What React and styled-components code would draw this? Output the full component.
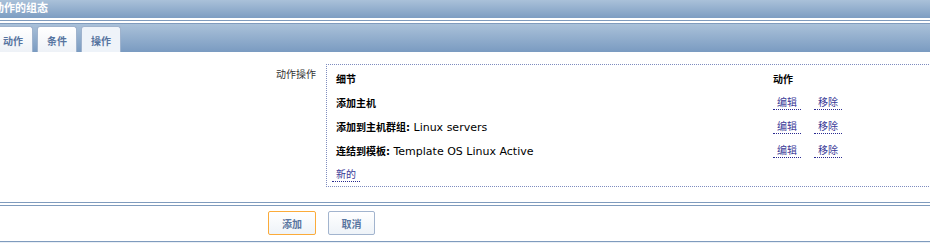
import React from "react";
import styled, { createGlobalStyle } from "styled-components";

const Global = createGlobalStyle`
  html, body { margin: 0; padding: 0; background: #e9eff6; overflow: hidden; }
  body { font-family: "DejaVu Sans", "Noto Sans CJK SC", sans-serif; font-size: 10px; color: #000; }
`;

const Page = styled.div`
  margin-left: -7px;
  width: 1200px;
  background: #fff;
`;

const TitleBar = styled.div`
  height: 18px;
  background: linear-gradient(#aac1d9, #7d9dc2);
  color: #fff;
  font-weight: bold;
  font-size: 11px;
  line-height: 18px;
  display: flex;
  align-items: center;
`;

const Rule = styled.div`
  height: 1px;
  background: #7f9bbd;
  margin-top: ${(p) => p.$gap || 0}px;
`;

const TabBar = styled.div`
  height: 28px;
  background: linear-gradient(#aac1d9, #7a9bc1);
  display: flex;
  align-items: flex-end;
  gap: 4px;
`;

const Tab = styled.div`
  width: 38px;
  height: 24px;
  border: 1px solid #9fb3cd;
  border-bottom: none;
  border-radius: 3px 3px 0 0;
  background: ${(p) => (p.$active ? "#eef3f9" : "linear-gradient(#ffffff, #eef2f7)")};
  color: #5674a0;
  font-weight: bold;
  display: flex;
  align-items: center;
  justify-content: center;
  padding-top: 1px;
  box-sizing: content-box;
`;

const Content = styled.div`
  padding: 12px 0 15px;
  display: flex;
  align-items: flex-start;
`;

const Label = styled.div`
  width: 323px;
  text-align: right;
  color: #333;
  padding-top: 4px;
  line-height: 13px;
  margin-right: 10px;
`;

const Box = styled.div`
  width: 700px;
  border: 1px dotted #7e8cbf;
  padding: 2px 0 0 5px;
  height: 119px;
  box-sizing: content-box;
  display: grid;
  grid-template-columns: 437px 1fr;
  grid-auto-rows: 24px;
  align-content: start;
  align-items: center;
`;

const Cell = styled.div`
  padding-left: ${(p) => (p.$flush ? 0 : 4)}px;
  display: flex;
  align-items: center;
  gap: 13px;
  line-height: 13px;
  white-space: nowrap;
`;

const Strong = styled.b`
  font-weight: bold;
`;

const Latin = styled.span`
  font-size: 11px;
`;

const Link = styled.span`
  display: inline-block;
  padding: 0 4px;
  line-height: 13px;
  color: #3a3a98;
  border-bottom: 1px dotted #2a2a90;
  cursor: pointer;
`;

const Footer = styled.div`
  padding: 5px 0 0 275px;
  height: 30px;
  display: flex;
  gap: 12px;
  align-items: flex-start;
  border-bottom: 1px solid #7f9bbd;
`;

const Button = styled.button`
  width: ${(p) => p.$w}px;
  height: 24px;
  border: 1px solid ${(p) => (p.$primary ? "#fbab3a" : "#a2b4ce")};
  border-radius: 2px;
  background: linear-gradient(#ffffff, #eef3f8);
  color: #5a76a0;
  font-family: "DejaVu Sans", "Noto Sans CJK SC", sans-serif;
  font-size: 10px;
  font-weight: bold;
  padding: 0;
`;

const rows = [
  { b: "添加主机", t: "" },
  { b: "添加到主机群组:", t: " Linux servers" },
  { b: "连结到模板:", t: " Template OS Linux Active" },
];

export default function App() {
  return (
    <>
      <Global />
      <Page>
        <TitleBar>动作的组态</TitleBar>
        <Rule $gap={2} />
        <Rule $gap={2} />
        <TabBar>
          <Tab>动作</Tab>
          <Tab>条件</Tab>
          <Tab $active>操作</Tab>
        </TabBar>
        <Content>
          <Label>动作操作</Label>
          <Box>
            <Cell><Strong>细节</Strong></Cell>
            <Cell><Strong>动作</Strong></Cell>
            {rows.map((r) => (
              <React.Fragment key={r.b}>
                <Cell>
                  <span><Strong>{r.b}</Strong>{r.t && <Latin>{r.t}</Latin>}</span>
                </Cell>
                <Cell>
                  <Link>编辑</Link>
                  <Link>移除</Link>
                </Cell>
              </React.Fragment>
            ))}
            <Cell $flush><Link>新的</Link></Cell>
          </Box>
        </Content>
        <Rule />
        <Rule $gap={2} />
        <Footer>
          <Button $primary $w={48}>添加</Button>
          <Button $w={47}>取消</Button>
        </Footer>
      </Page>
    </>
  );
}
